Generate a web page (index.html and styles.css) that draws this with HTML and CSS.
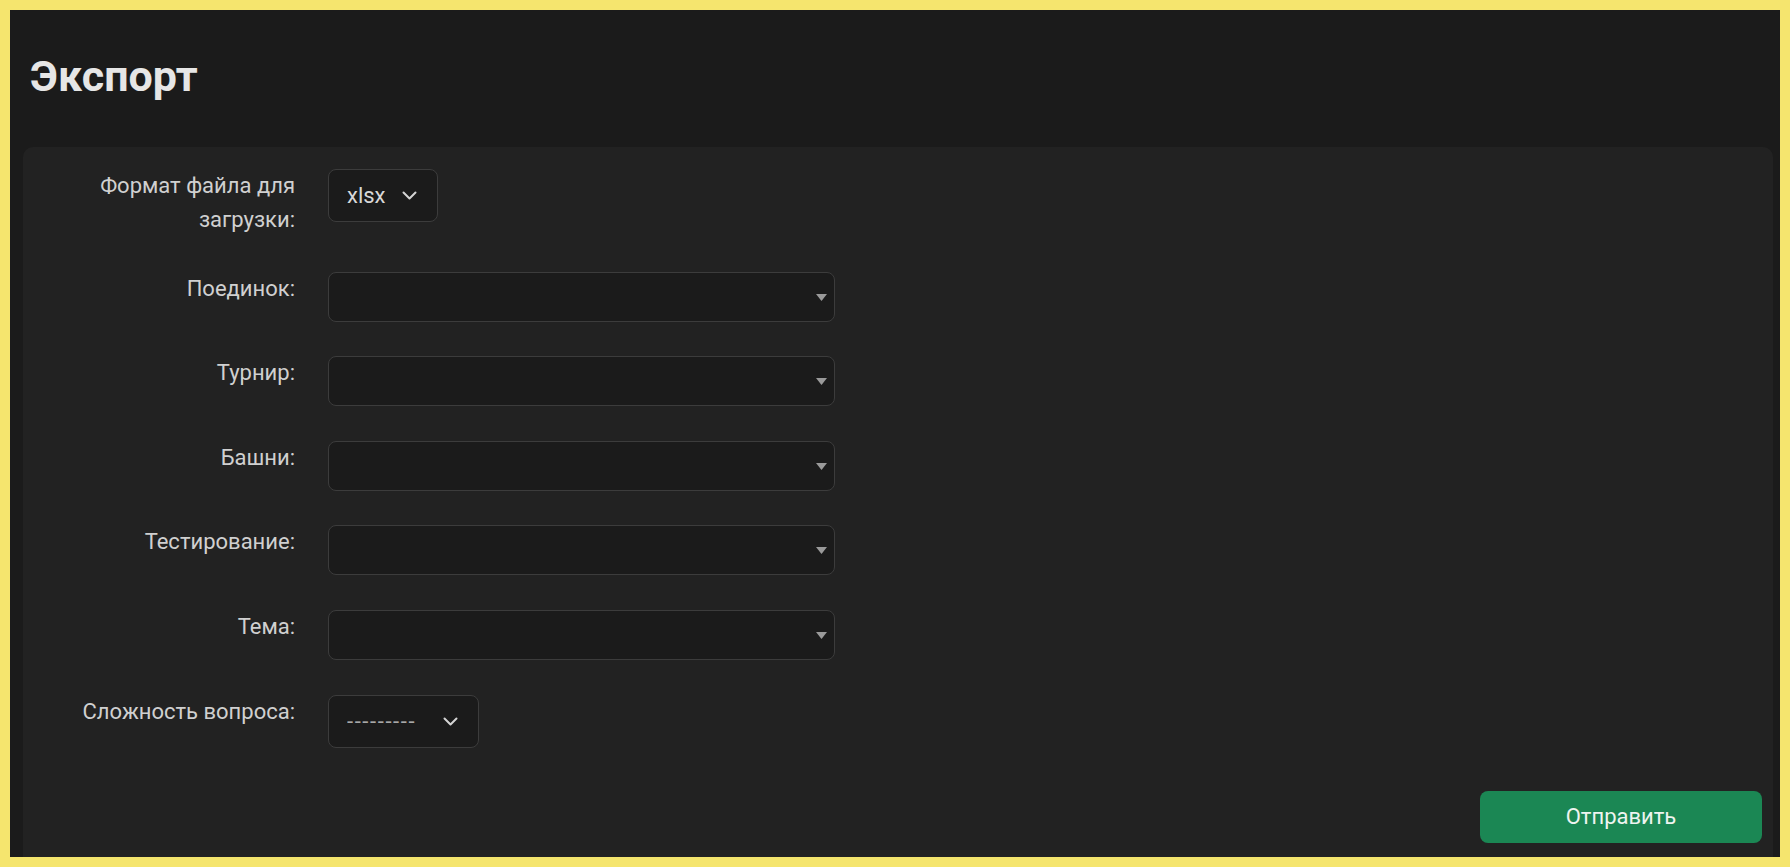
FILE: index.html
```html
<html>
  <head>
    <title>Экспорт</title>
    <meta charset="UTF-8" />
    <meta name="viewport" content="width=device-width, initial-scale = 1.0" />
    <link rel="stylesheet" href="styles.css">
  </head>

  <body>
    <div class="page">
      <h1 class="title">Экспорт</h1>

      <form class="card">
        <div class="field">
          <label class="field-label">Формат файла для загрузки:</label>
          <div class="select-sm">
            <select class="format-select">
              <option>xlsx</option>
              <option>csv</option>
            </select>
            <svg class="chevron" width="15" height="9" viewBox="0 0 15 9">
              <path d="M1.5 1.5 L7.5 7.5 L13.5 1.5" fill="none" stroke="#d4d4d4" stroke-width="2" stroke-linecap="round" stroke-linejoin="round" />
            </svg>
          </div>
        </div>

        <div class="field">
          <label class="field-label">Поединок:</label>
          <div class="select-lg">
            <select></select>
            <svg class="caret" width="11" height="7" viewBox="0 0 11 7">
              <path d="M0 0 L11 0 L5.5 7 Z" fill="#9a9a9a" />
            </svg>
          </div>
        </div>

        <div class="field">
          <label class="field-label">Турнир:</label>
          <div class="select-lg">
            <select></select>
            <svg class="caret" width="11" height="7" viewBox="0 0 11 7">
              <path d="M0 0 L11 0 L5.5 7 Z" fill="#9a9a9a" />
            </svg>
          </div>
        </div>

        <div class="field">
          <label class="field-label">Башни:</label>
          <div class="select-lg">
            <select></select>
            <svg class="caret" width="11" height="7" viewBox="0 0 11 7">
              <path d="M0 0 L11 0 L5.5 7 Z" fill="#9a9a9a" />
            </svg>
          </div>
        </div>

        <div class="field">
          <label class="field-label">Тестирование:</label>
          <div class="select-lg">
            <select></select>
            <svg class="caret" width="11" height="7" viewBox="0 0 11 7">
              <path d="M0 0 L11 0 L5.5 7 Z" fill="#9a9a9a" />
            </svg>
          </div>
        </div>

        <div class="field">
          <label class="field-label">Тема:</label>
          <div class="select-lg">
            <select></select>
            <svg class="caret" width="11" height="7" viewBox="0 0 11 7">
              <path d="M0 0 L11 0 L5.5 7 Z" fill="#9a9a9a" />
            </svg>
          </div>
        </div>

        <div class="field">
          <label class="field-label">Сложность вопроса:</label>
          <div class="select-sm">
            <select class="level-select">
              <option>---------</option>
              <option>Лёгкий</option>
              <option>Средний</option>
              <option>Сложный</option>
            </select>
            <svg class="chevron" width="15" height="9" viewBox="0 0 15 9">
              <path d="M1.5 1.5 L7.5 7.5 L13.5 1.5" fill="none" stroke="#d4d4d4" stroke-width="2" stroke-linecap="round" stroke-linejoin="round" />
            </svg>
          </div>
        </div>

        <div class="actions">
          <button type="button" class="submit-button">Отправить</button>
        </div>
      </form>
    </div>
  </body>
</html>
```

FILE: styles.css
```css
body {
  margin: 0;
  padding: 10px;
  height: 867px;
  box-sizing: border-box;
  background: #f5e56e;
  font-family: Roboto, "Liberation Sans", Arial, sans-serif;
}

.page {
  height: 847px;
  background: #1b1b1b;
  overflow: hidden;
  display: flex;
  flex-direction: column;
}

.title {
  margin: 0;
  padding: 40px 0 0 20px;
  color: #e6e6e6;
  font-size: 43px;
  line-height: 52px;
  font-weight: bold;
}

.card {
  flex: 1;
  margin: 45px 7px 0 13px;
  padding: 22px 11px 12px 32px;
  background: #222222;
  border-radius: 10px 10px 0 0;
}

.field {
  display: flex;
  align-items: flex-start;
  gap: 33px;
  margin-bottom: 34.6px;
}

.field-label {
  width: 240px;
  text-align: right;
  color: #d0d0d0;
  font-size: 22px;
  line-height: 34px;
}

/* Selects */
.select-sm,
.select-lg {
  position: relative;
}

.select-sm select,
.select-lg select {
  appearance: none;
  -webkit-appearance: none;
  background: #1b1b1b;
  border: 1.5px solid #3c3c3c;
  border-radius: 8px;
  color: #d8d8d8;
  font-family: inherit;
  font-size: 22px;
  outline: none;
}

.select-sm select {
  height: 53px;
  padding: 0 0 0 18px;
}

.format-select {
  width: 110px;
}

.level-select {
  width: 151px;
  letter-spacing: 1.6px;
  color: #a8a8a8 !important;
}

.select-lg select {
  width: 507px;
  height: 50px;
  padding: 0 30px 0 14px;
}

.chevron {
  position: absolute;
  right: 21px;
  top: 22px;
  pointer-events: none;
}

.caret {
  position: absolute;
  right: 8px;
  top: 22px;
  pointer-events: none;
}

.actions {
  display: flex;
  justify-content: flex-end;
  margin-top: 43px;
}

.submit-button {
  width: 282px;
  height: 52px;
  border: none;
  border-radius: 8px;
  background: #1b8754;
  color: #eef4f0;
  font-family: inherit;
  font-size: 22px;
}
```
